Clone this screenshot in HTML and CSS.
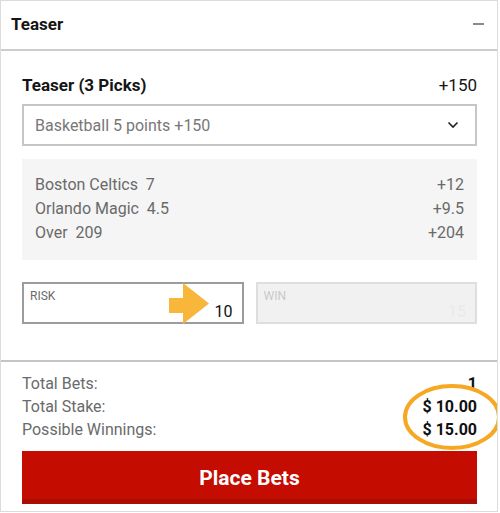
FILE: index.html
```html
<!DOCTYPE html>
<html>
<head>
<meta charset="utf-8">
<link rel="stylesheet" href="styles.css">
</head>
<body>
<div class="panel">
  <div class="header">
    <span class="header-title">Teaser</span>
    <span class="collapse"></span>
  </div>
  <div class="content">
    <div class="title-row">
      <span class="title">Teaser (3 Picks)</span>
      <span class="odds">+150</span>
    </div>
    <div class="select">
      <span>Basketball 5 points +150</span>
      <svg class="chevron" width="12" height="8" viewBox="0 0 12 8"><path d="M1.5 1.5 L6 6 L10.5 1.5" fill="none" stroke="#222" stroke-width="1.6"/></svg>
    </div>
    <div class="picks">
      <div class="pick"><span>Boston Celtics&nbsp; 7</span><span>+12</span></div>
      <div class="pick"><span>Orlando Magic&nbsp; 4.5</span><span>+9.5</span></div>
      <div class="pick"><span>Over&nbsp; 209</span><span>+204</span></div>
    </div>
    <div class="stake-row">
      <div class="field risk">
        <span class="label">RISK</span>
        <span class="value">10</span>
        <svg class="arrow" width="42" height="42" viewBox="0 0 42 42"><path d="M0 15 H14 V0 L40 20.5 L14 41 V30 H0 Z" fill="#f8b63b"/></svg>
      </div>
      <div class="field win">
        <span class="label">WIN</span>
        <span class="value ghost">15</span>
      </div>
    </div>
  </div>
  <div class="footer">
    <div class="total"><span>Total Bets:</span><span class="amt">1</span></div>
    <div class="total"><span>Total Stake:</span><span class="amt">$ 10.00</span></div>
    <div class="total"><span>Possible Winnings:</span><span class="amt">$ 15.00</span></div>
    <button class="place">Place Bets</button>
    <svg class="ring" width="104" height="70" viewBox="0 0 104 70"><ellipse cx="52" cy="35" rx="47" ry="31" fill="none" stroke="#f6a823" stroke-width="4"/></svg>
  </div>
</div>
</body>
</html>
```
FILE: styles.css
```css
* { box-sizing: border-box; }
body {
  margin: 0;
  font-family: Roboto, "Liberation Sans", sans-serif;
  background: #fff;
}
.panel {
  width: 498px;
  height: 512px;
  border: 1px solid #dcdcdc;
  position: relative;
  overflow: hidden;
}
.header {
  height: 50px;
  border-bottom: 2px solid #cdcdcd;
  display: flex;
  align-items: center;
  justify-content: space-between;
  padding: 0 13px 2px 10px;
}
.header-title {
  font-size: 17px;
  font-weight: 700;
  color: #151515;
}
.collapse {
  width: 11px;
  height: 2px;
  background: #8a8a8a;
}
.content {
  padding: 24px 20px 36px 21px;
}
.title-row {
  display: flex;
  justify-content: space-between;
  align-items: center;
  height: 20px;
}
.title {
  font-size: 17px;
  font-weight: 700;
  color: #151515;
}
.odds {
  font-size: 17px;
  color: #151515;
}
.select {
  margin-top: 9px;
  height: 42px;
  border: 2px solid #c6c6c6;
  display: flex;
  align-items: center;
  justify-content: space-between;
  padding: 0 16px 0 11px;
  font-size: 16px;
  color: #777;
}
.picks {
  margin-top: 13px;
  background: #f5f5f5;
  padding: 14px 13px 15px 13px;
  height: 101px;
}
.pick {
  display: flex;
  justify-content: space-between;
  height: 24px;
  line-height: 24px;
  font-size: 16px;
  color: #6a6a6a;
}
.stake-row {
  margin-top: 22px;
  display: flex;
  gap: 12px;
}
.field {
  flex: 1;
  height: 42px;
  position: relative;
  display: flex;
  flex-direction: column;
  justify-content: space-between;
  padding: 5px 9px 4px 6px;
}
.risk {
  border: 2px solid #9c9c9c;
  background: #fff;
}
.win {
  border: 2px solid #dedede;
  background: #f1f1f1;
}
.label {
  font-size: 12px;
  color: #6a6a6a;
  line-height: 14px;
}
.win .label { color: #c9c9c9; }
.value {
  align-self: flex-end;
  font-size: 16px;
  line-height: 18px;
  color: #111;
}
.ghost { color: #eaeaea; }
.arrow {
  position: absolute;
  left: 145px;
  top: -1px;
}
.footer {
  border-top: 2px solid #c4c4c4;
  padding: 10px 20px 0 21px;
  position: relative;
}
.total {
  display: flex;
  justify-content: space-between;
  height: 23px;
  line-height: 23px;
  font-size: 16px;
  color: #6a6a6a;
}
.amt {
  font-weight: 700;
  color: #111;
  font-size: 16px;
}
.place {
  display: block;
  width: 100%;
  margin-top: 10px;
  height: 53px;
  border: none;
  background: #c40c00;
  box-shadow: inset 0 -5px 0 #a80c02;
  color: #fff;
  font-family: Roboto, "Liberation Sans", sans-serif;
  font-size: 21px;
  font-weight: 700;
  padding: 0;
}
.ring {
  position: absolute;
  left: 399px;
  top: 20px;
}
```
